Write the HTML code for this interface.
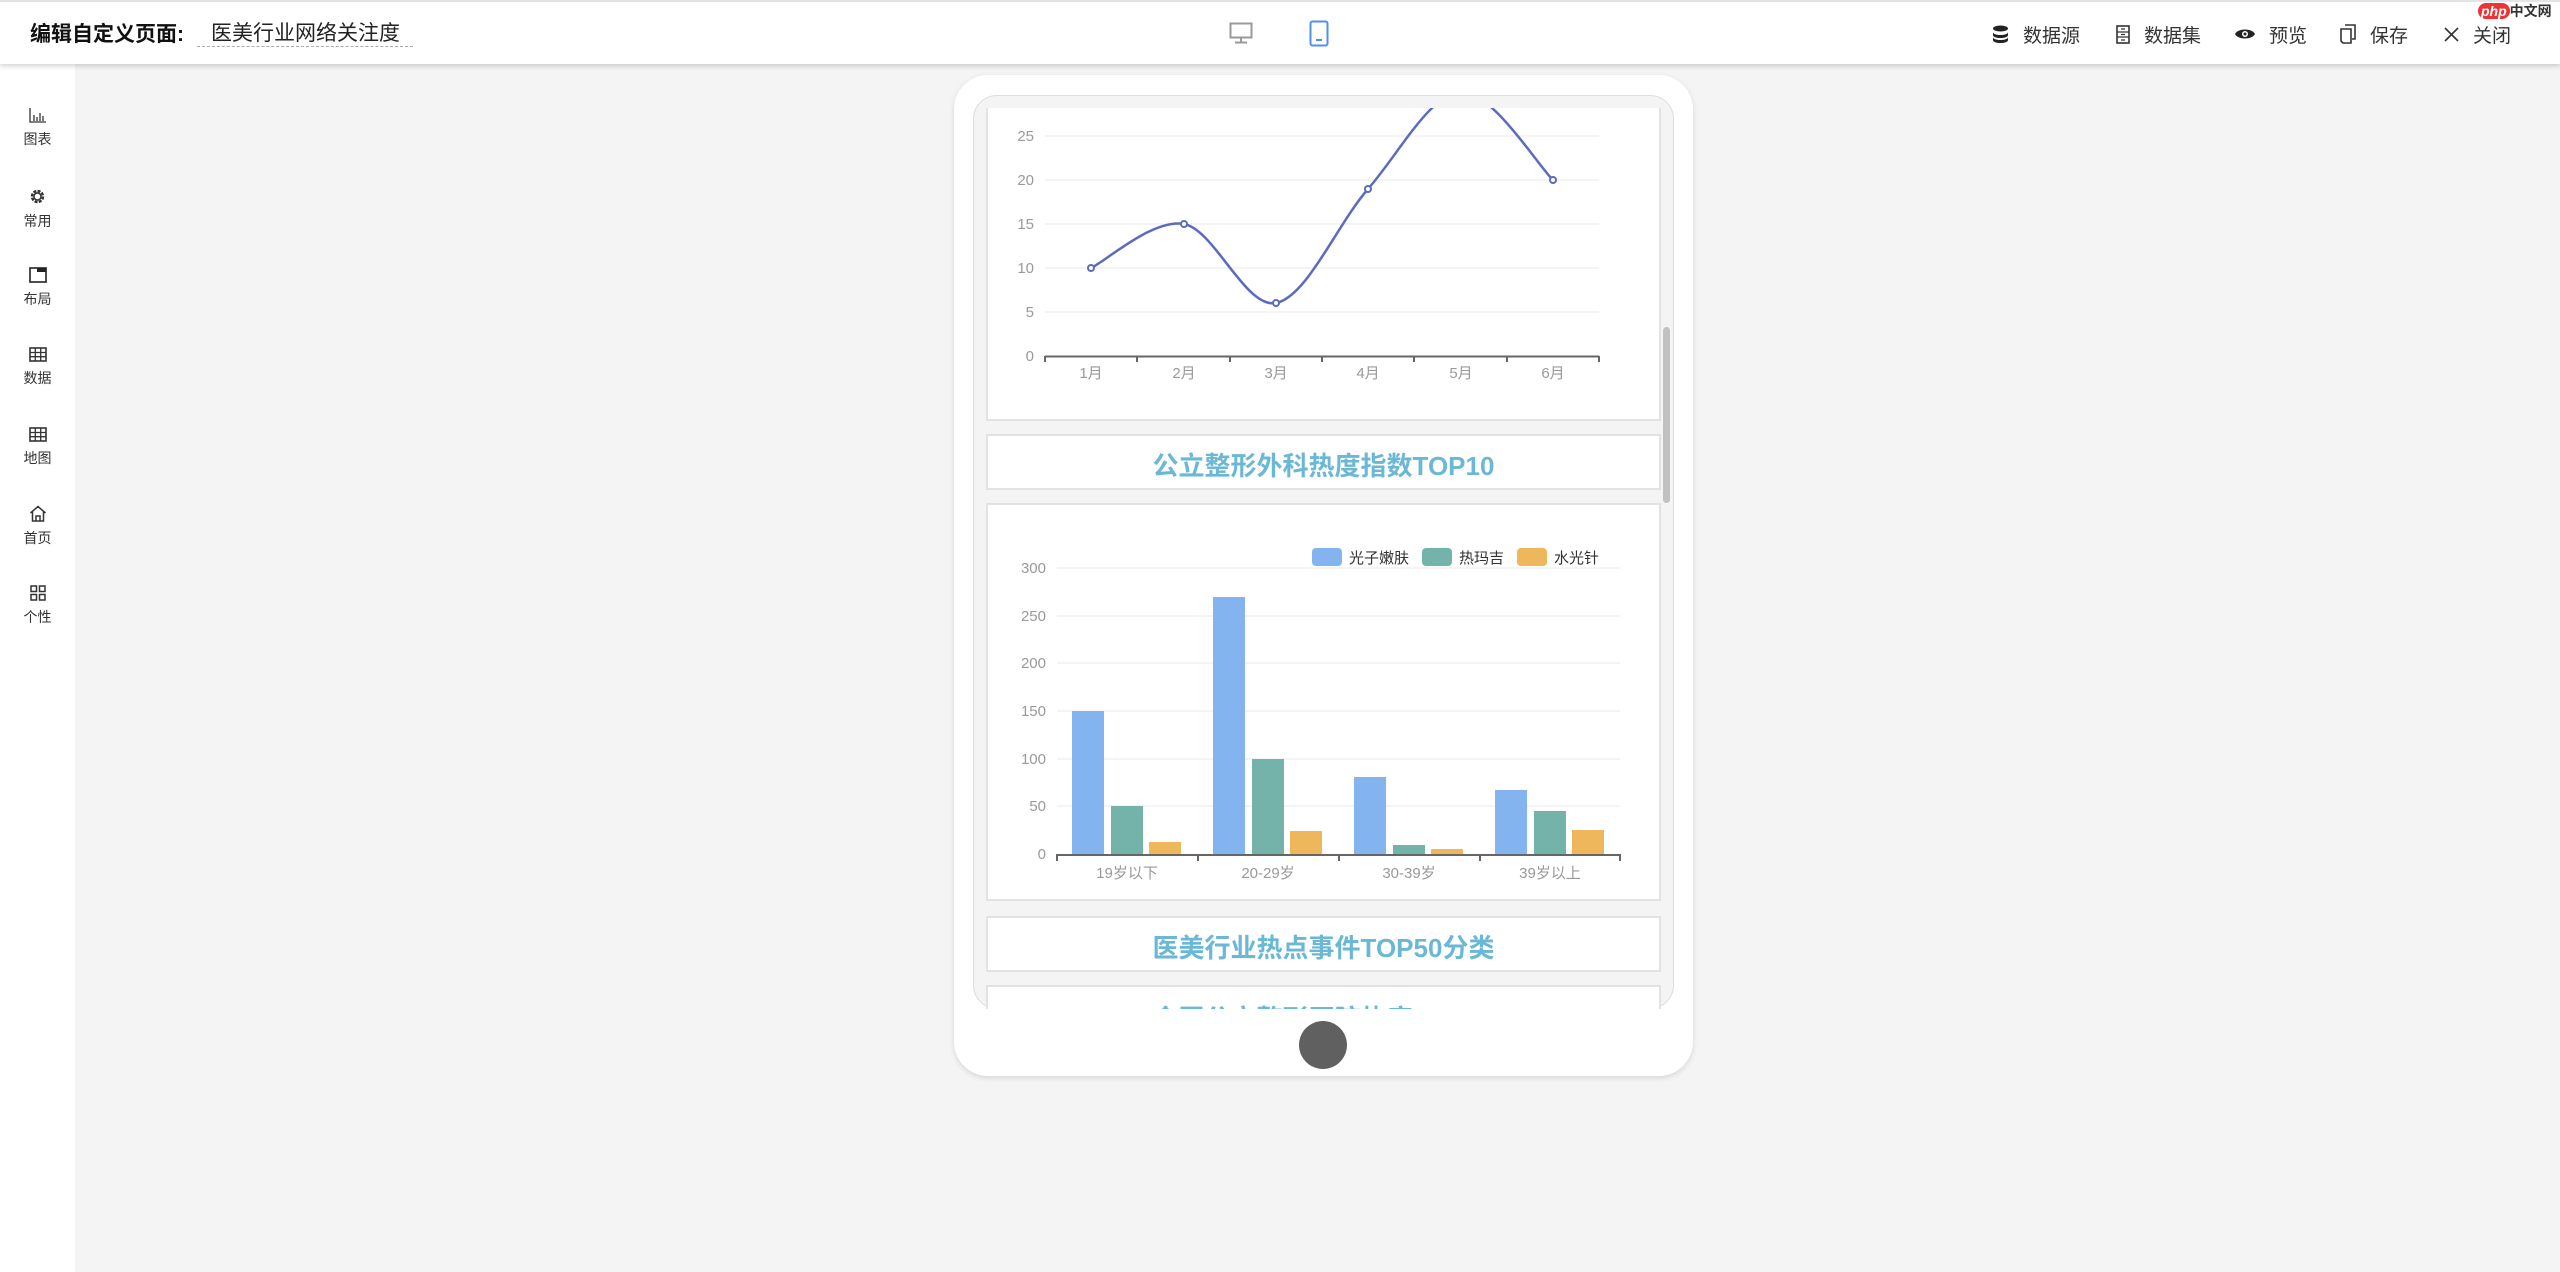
<!DOCTYPE html>
<html><head><meta charset="utf-8"><style>
*{margin:0;padding:0;box-sizing:border-box}
body{width:2560px;height:1272px;overflow:hidden;background:#f4f4f4;font-family:"Liberation Sans","Noto Sans CJK SC",sans-serif;position:relative;color:#333}
.hdr{position:absolute;left:0;top:0;width:2560px;height:64px;background:#fff;border-top:2px solid #e4e4e4;box-shadow:0 2px 5px rgba(0,0,0,.18);z-index:5}
.abs{position:absolute}
.side{position:absolute;left:0;top:64px;width:75px;height:1208px;background:#fff}
.si{position:absolute;left:0;width:75px;text-align:center;font-size:14px;color:#333}
.si svg{display:block;margin:0 auto 6px}
.tb{position:absolute;top:19px;font-size:19px;color:#333;display:flex;align-items:center;gap:14px;height:26px}
.card{position:absolute;left:986px;width:675px;background:#fff;border:2px solid #e2e2e2}
.ttl{color:#6bb7d6;font-weight:bold;font-size:26px;text-align:center}
</style></head><body>
<div class="hdr">
  <div class="abs" style="left:30px;top:16px;font-size:21px;font-weight:bold;color:#111">编辑自定义页面:</div>
  <div class="abs" style="left:197px;top:15px;width:216px;height:30px;border-bottom:1.5px dashed #aaa;font-size:21px;color:#222;padding-left:14px">医美行业网络关注度</div>
  <svg class="abs" style="left:1229px;top:20px" width="24" height="22" viewBox="0 0 24 22"><rect x="1.5" y="1.5" width="21" height="14" fill="none" stroke="#999" stroke-width="2"/><path d="M12 16v4M6 20.5h12" stroke="#999" stroke-width="2"/></svg>
  <svg class="abs" style="left:1309px;top:18px" width="20" height="27" viewBox="0 0 20 27"><rect x="1.5" y="1.5" width="17" height="24" rx="2" fill="none" stroke="#4f8ff0" stroke-width="2"/><path d="M7 20h6" stroke="#4f8ff0" stroke-width="2"/></svg>
  <div class="tb" style="left:1992px"><svg width="17" height="18" viewBox="0 0 17 18"><ellipse cx="8.5" cy="3.5" rx="7.5" ry="3" fill="#222"/><path d="M1 7c0 4 15 4 15 0v3c0 4-15 4-15 0zM1 12c0 4 15 4 15 0v3c0 4-15 4-15 0z" fill="#222"/></svg><span>数据源</span></div>
  <div class="tb" style="left:2116px"><svg width="14" height="19" viewBox="0 0 14 19"><rect x="1" y="1" width="12" height="17" fill="none" stroke="#333" stroke-width="1.6"/><path d="M1 7h12M1 12h12M5 4h4M5 9.5h4M5 15h4" stroke="#333" stroke-width="1.3"/></svg><span>数据集</span></div>
  <div class="tb" style="left:2235px"><svg width="20" height="14" viewBox="0 0 20 14"><path d="M0 7C3 1 17 1 20 7 17 13 3 13 0 7z" fill="#222"/><circle cx="10" cy="7" r="3" fill="#fff"/><circle cx="10" cy="7" r="1.5" fill="#222"/></svg><span>预览</span></div>
  <div class="tb" style="left:2340px"><svg width="16" height="20" viewBox="0 0 16 20"><path d="M5 1h10v14H12M1 5h10v14H3L1 17z" fill="none" stroke="#333" stroke-width="1.6"/></svg><span>保存</span></div>
  <div class="tb" style="left:2444px"><svg width="15" height="15" viewBox="0 0 15 15"><path d="M1 1l13 13M14 1L1 14" stroke="#333" stroke-width="1.6"/></svg><span>关闭</span></div>
  <div class="abs" style="left:2478px;top:-1px;font-size:14px;font-weight:bold;color:#333"><span style="background:#e33;color:#fff;border-radius:9px;padding:0 3px;font-style:italic">php</span>中文网</div>
</div>
<div class="side">
  <div class="si" style="top:44px"><svg width="17" height="15" viewBox="0 0 17 15"><path d="M1 0v14h16M5 7v6M8 9v4M11 5v8M14 8v5" stroke="#333" stroke-width="1.3" fill="none"/></svg>图表</div>
  <div class="si" style="top:124px"><svg width="17" height="17" viewBox="0 0 17 17"><circle cx="8.5" cy="8.5" r="5.5" fill="none" stroke="#333" stroke-width="2.5" stroke-dasharray="3 1.3"/><circle cx="8.5" cy="8.5" r="3.5" fill="none" stroke="#333" stroke-width="1.5"/></svg>常用</div>
  <div class="si" style="top:203px"><svg width="18" height="16" viewBox="0 0 18 16"><rect x="1" y="1" width="16" height="14" fill="none" stroke="#222" stroke-width="1.6"/><rect x="8" y="1" width="9" height="4" fill="#222"/></svg>布局</div>
  <div class="si" style="top:283px"><svg width="18" height="15" viewBox="0 0 18 15"><rect x="1" y="1" width="16" height="13" fill="none" stroke="#333" stroke-width="1.6"/><path d="M1 5.5h16M1 9.7h16M6.3 1v13M11.7 1v13" stroke="#333" stroke-width="1.3"/></svg>数据</div>
  <div class="si" style="top:363px"><svg width="18" height="15" viewBox="0 0 18 15"><rect x="1" y="1" width="16" height="13" fill="none" stroke="#333" stroke-width="1.6"/><path d="M1 5.5h16M1 9.7h16M6.3 1v13M11.7 1v13" stroke="#333" stroke-width="1.3"/></svg>地图</div>
  <div class="si" style="top:441px"><svg width="18" height="17" viewBox="0 0 18 17"><path d="M1.5 8L9 1.5 16.5 8M3.5 6.5V16h11V6.5M7 16v-5h4v5" fill="none" stroke="#333" stroke-width="1.5"/></svg>首页</div>
  <div class="si" style="top:521px"><svg width="16" height="16" viewBox="0 0 16 16"><g fill="none" stroke="#333" stroke-width="1.5"><rect x="1" y="1" width="5.5" height="5.5"/><rect x="9.5" y="1" width="5.5" height="5.5"/><rect x="1" y="9.5" width="5.5" height="5.5"/><rect x="9.5" y="9.5" width="5.5" height="5.5"/></g></svg>个性</div>
</div>

<div class="abs" style="left:954px;top:75px;width:739px;height:1001px;background:#fff;border-radius:34px;box-shadow:0 2px 6px rgba(0,0,0,.12)"></div>
<div class="abs" style="left:973px;top:95px;width:701px;height:914px;background:#f4f4f4;border:1.5px solid #ddd;border-radius:24px;overflow:hidden"></div>
<div class="abs" style="left:973px;top:108px;width:701px;height:901px;overflow:hidden">
  <div class="card" style="left:13px;top:-10px;height:323px">
    <svg class="abs" style="left:-988px;top:-100px" width="1700" height="440" viewBox="0 0 1700 440">
      <g stroke="#f0f0f0" stroke-width="1.5"><path d="M1045 136H1599M1045 180H1599M1045 224H1599M1045 268H1599M1045 312H1599"/></g>
      <g font-family="Liberation Sans,sans-serif" font-size="15" fill="#999" text-anchor="end"><text x="1034" y="141">25</text><text x="1034" y="185">20</text><text x="1034" y="229">15</text><text x="1034" y="273">10</text><text x="1034" y="317">5</text><text x="1034" y="361">0</text></g>
      <path d="M1045 356.5H1599" stroke="#666" stroke-width="2"/>
      <g stroke="#666" stroke-width="2"><path d="M1045 356v6M1137 356v6M1230 356v6M1322 356v6M1414 356v6M1507 356v6M1599 356v6"/></g>
      <g font-family="Liberation Sans,Noto Sans CJK SC,sans-serif" font-size="15" fill="#999" text-anchor="middle"><text x="1091" y="378">1月</text><text x="1184" y="378">2月</text><text x="1276" y="378">3月</text><text x="1368" y="378">4月</text><text x="1461" y="378">5月</text><text x="1553" y="378">6月</text></g>
      <path d="M1091 268C1106.5 260.7 1153.2 218.2 1184 224C1214.8 229.8 1245.3 308.8 1276 303C1306.7 297.2 1337.2 224.2 1368 189C1398.8 153.8 1430.2 93.5 1461 92C1491.8 90.5 1537.7 165.3 1553 180" fill="none" stroke="#5b6bc0" stroke-width="2.5"/>
      <g fill="#fff" stroke="#5b6bc0" stroke-width="2"><circle cx="1091" cy="268" r="3"/><circle cx="1184" cy="224" r="3"/><circle cx="1276" cy="303" r="3"/><circle cx="1368" cy="189" r="3"/><circle cx="1553" cy="180" r="3"/></g>
    </svg>
  </div>
  <div class="card ttl" style="left:13px;top:326px;height:56px;line-height:60px">公立整形外科热度指数TOP10</div>
  <div class="card" style="left:13px;top:395px;height:398px">
    <svg class="abs" style="left:-988px;top:-505px" width="1700" height="900" viewBox="0 0 1700 900">
      <g stroke="#f0f0f0" stroke-width="1.5"><path d="M1057 568H1620M1057 616H1620M1057 663H1620M1057 711H1620M1057 759H1620M1057 806H1620"/></g>
      <g font-family="Liberation Sans,sans-serif" font-size="15" fill="#999" text-anchor="end"><text x="1046" y="573">300</text><text x="1046" y="621">250</text><text x="1046" y="668">200</text><text x="1046" y="716">150</text><text x="1046" y="764">100</text><text x="1046" y="811">50</text><text x="1046" y="859">0</text></g>
      <g fill="#83b4f0"><rect x="1072" y="711" width="32" height="143"/><rect x="1213" y="597" width="32" height="257"/><rect x="1354" y="777" width="32" height="77"/><rect x="1495" y="790" width="32" height="64"/></g>
      <g fill="#74b3aa"><rect x="1111" y="806" width="32" height="48"/><rect x="1252" y="759" width="32" height="95"/><rect x="1393" y="845" width="32" height="9"/><rect x="1534" y="811" width="32" height="43"/></g>
      <g fill="#eeb75c"><rect x="1149" y="842" width="32" height="12"/><rect x="1290" y="831" width="32" height="23"/><rect x="1431" y="849" width="32" height="5"/><rect x="1572" y="830" width="32" height="24"/></g>
      <path d="M1057 855H1621" stroke="#666" stroke-width="2"/>
      <g stroke="#666" stroke-width="2"><path d="M1057 854v7M1198 854v7M1339 854v7M1480 854v7M1620 854v7"/></g>
      <g font-family="Liberation Sans,Noto Sans CJK SC,sans-serif" font-size="15" fill="#999" text-anchor="middle"><text x="1127" y="878">19岁以下</text><text x="1268" y="878">20-29岁</text><text x="1409" y="878">30-39岁</text><text x="1550" y="878">39岁以上</text></g>
      <rect x="1312" y="548" width="30" height="18" rx="4" fill="#83b4f0"/><rect x="1422" y="548" width="30" height="18" rx="4" fill="#74b3aa"/><rect x="1517" y="548" width="30" height="18" rx="4" fill="#eeb75c"/>
      <g font-family="Liberation Sans,Noto Sans CJK SC,sans-serif" font-size="15" fill="#333"><text x="1349" y="563">光子嫩肤</text><text x="1459" y="563">热玛吉</text><text x="1554" y="563">水光针</text></g>
    </svg>
  </div>
  <div class="card ttl" style="left:13px;top:808px;height:56px;line-height:60px">医美行业热点事件TOP50分类</div>
  <div class="card ttl" style="left:13px;top:877px;height:56px;line-height:56px;padding-top:4px">全国公立整形医院热度TOP10</div>
</div>
<div class="abs" style="left:1663px;top:327px;width:7px;height:176px;background:#c1c1c1;border-radius:4px"></div>
<div class="abs" style="left:1299px;top:1021px;width:48px;height:48px;border-radius:50%;background:#606060"></div>
</body></html>
